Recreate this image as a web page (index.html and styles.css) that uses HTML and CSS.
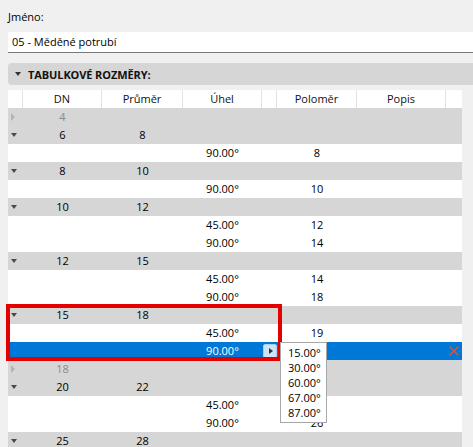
FILE: index.html
```html
<!DOCTYPE html>
<html lang="cs">
<head>
<meta charset="utf-8">
<title>Tabulkové rozměry</title>
<link rel="stylesheet" href="styles.css">
</head>
<body>
<div class="page">
  <div class="label">Jméno:</div>
  <div class="input">05 - Měděné potrubí</div>
  <div class="section"><span class="tri-down dark"></span><span class="section-title">TABULKOVÉ ROZMĚRY:</span></div>
  <div class="table">
    <div class="row head">
      <div class="c"></div><div class="c">DN</div><div class="c">Průměr</div><div class="c">Úhel</div><div class="c"></div><div class="c">Poloměr</div><div class="c">Popis</div><div class="c"></div>
    </div>
    <div class="row grp off"><div class="c"><span class="tri-right"></span></div><div class="c">4</div><div class="c"></div><div class="c"></div><div class="c"></div><div class="c"></div><div class="c"></div><div class="c"></div></div>
    <div class="row grp"><div class="c"><span class="tri-down"></span></div><div class="c">6</div><div class="c">8</div><div class="c"></div><div class="c"></div><div class="c"></div><div class="c"></div><div class="c"></div></div>
    <div class="row"><div class="c"></div><div class="c"></div><div class="c"></div><div class="c">90.00°</div><div class="c"></div><div class="c">8</div><div class="c"></div><div class="c"></div></div>
    <div class="row grp"><div class="c"><span class="tri-down"></span></div><div class="c">8</div><div class="c">10</div><div class="c"></div><div class="c"></div><div class="c"></div><div class="c"></div><div class="c"></div></div>
    <div class="row"><div class="c"></div><div class="c"></div><div class="c"></div><div class="c">90.00°</div><div class="c"></div><div class="c">10</div><div class="c"></div><div class="c"></div></div>
    <div class="row grp"><div class="c"><span class="tri-down"></span></div><div class="c">10</div><div class="c">12</div><div class="c"></div><div class="c"></div><div class="c"></div><div class="c"></div><div class="c"></div></div>
    <div class="row"><div class="c"></div><div class="c"></div><div class="c"></div><div class="c">45.00°</div><div class="c"></div><div class="c">12</div><div class="c"></div><div class="c"></div></div>
    <div class="row"><div class="c"></div><div class="c"></div><div class="c"></div><div class="c">90.00°</div><div class="c"></div><div class="c">14</div><div class="c"></div><div class="c"></div></div>
    <div class="row grp"><div class="c"><span class="tri-down"></span></div><div class="c">12</div><div class="c">15</div><div class="c"></div><div class="c"></div><div class="c"></div><div class="c"></div><div class="c"></div></div>
    <div class="row"><div class="c"></div><div class="c"></div><div class="c"></div><div class="c">45.00°</div><div class="c"></div><div class="c">14</div><div class="c"></div><div class="c"></div></div>
    <div class="row"><div class="c"></div><div class="c"></div><div class="c"></div><div class="c">90.00°</div><div class="c"></div><div class="c">18</div><div class="c"></div><div class="c"></div></div>
    <div class="row grp"><div class="c"><span class="tri-down"></span></div><div class="c">15</div><div class="c">18</div><div class="c"></div><div class="c"></div><div class="c"></div><div class="c"></div><div class="c"></div></div>
    <div class="row"><div class="c"></div><div class="c"></div><div class="c"></div><div class="c">45.00°</div><div class="c"></div><div class="c">19</div><div class="c"></div><div class="c"></div></div>
    <div class="row sel"><div class="c"></div><div class="c"></div><div class="c"></div><div class="c">90.00°</div><div class="c"><span class="btn"><span class="btn-tri"></span></span></div><div class="c"></div><div class="c"></div><div class="c"><svg class="del" width="10" height="10" viewBox="0 0 10 10"><path d="M0.5 0.5 L9.5 9.5 M9.5 0.5 L0.5 9.5" stroke="#e8532f" stroke-width="1.4" fill="none"/></svg></div></div>
    <div class="row grp off"><div class="c"><span class="tri-right"></span></div><div class="c">18</div><div class="c"></div><div class="c"></div><div class="c"></div><div class="c"></div><div class="c"></div><div class="c"></div></div>
    <div class="row grp"><div class="c"><span class="tri-down"></span></div><div class="c">20</div><div class="c">22</div><div class="c"></div><div class="c"></div><div class="c"></div><div class="c"></div><div class="c"></div></div>
    <div class="row"><div class="c"></div><div class="c"></div><div class="c"></div><div class="c">45.00°</div><div class="c"></div><div class="c"></div><div class="c"></div><div class="c"></div></div>
    <div class="row"><div class="c"></div><div class="c"></div><div class="c"></div><div class="c">90.00°</div><div class="c"></div><div class="c">26</div><div class="c"></div><div class="c"></div></div>
    <div class="row grp"><div class="c"><span class="tri-down"></span></div><div class="c">25</div><div class="c">28</div><div class="c"></div><div class="c"></div><div class="c"></div><div class="c"></div><div class="c"></div></div>

    <div class="highlight"></div>
    <ul class="dropdown">
      <li>15.00°</li>
      <li>30.00°</li>
      <li>60.00°</li>
      <li>67.00°</li>
      <li>87.00°</li>
    </ul>
  </div>
</div>
</body>
</html>
```

FILE: styles.css
```css
html, body {
  margin: 0;
  padding: 0;
  height: 100%;
  overflow: hidden;
}
body {
  background: #f0f0f0;
  font-family: "Open Sans", "Noto Sans", sans-serif;
  font-size: 11px;
  color: #000;
}
.page {
  padding-left: 8px;
}
.label {
  padding-top: 9px;
  line-height: 16px;
  height: 16px;
  color: #000;
}
.input {
  margin-top: 7px;
  height: 20px;
  line-height: 20px;
  background: #fff;
  border-bottom: 1px solid #7a7a7a;
  padding-left: 4px;
}
.section {
  margin-top: 10px;
  height: 22px;
  background: #d6d6d6;
  border-radius: 4px 0 0 4px;
  display: flex;
  align-items: center;
}
.section-title {
  font-weight: bold;
  color: #111;
  margin-left: 7px;
  letter-spacing: -0.1px;
}
.tri-down {
  display: inline-block;
  width: 0;
  height: 0;
  border-left: 3.5px solid transparent;
  border-right: 3.5px solid transparent;
  border-top: 4px solid #4a4a4a;
}
.section .tri-down {
  margin-left: 7px;
  border-top-color: #333;
}
.tri-right {
  display: inline-block;
  width: 0;
  height: 0;
  border-top: 4px solid transparent;
  border-bottom: 4px solid transparent;
  border-left: 4px solid #b4b4b4;
}
.table {
  position: relative;
  margin-top: 5px;
  width: 454px;
}
.row {
  display: grid;
  grid-template-columns: 15px 79px 81px 79px 15px 80px 89px 16px;
  height: 18px;
  line-height: 18px;
  background: #fff;
}
.c {
  text-align: center;
  white-space: nowrap;
  overflow: hidden;
  display: flex;
  align-items: center;
  justify-content: center;
}
.row .c:first-child {
  justify-content: flex-start;
  padding-left: 3px;
}
.head .c {
  border-right: 1px solid #e2e2e2;
  color: #111;
}
.head .c:last-child {
  border-right: none;
}
.grp {
  background: #d6d6d6;
}
.off {
  color: #8a8a8a;
}
.sel {
  background: #0078d7;
  color: #fff;
}
.btn {
  width: 12px;
  height: 12px;
  background: #cce4f7;
  border: 1px solid #a8cff0;
  border-radius: 2px;
  display: flex;
  align-items: center;
  justify-content: center;
  margin-left: 1px;
}
.btn-tri {
  width: 0;
  height: 0;
  border-top: 3.5px solid transparent;
  border-bottom: 3.5px solid transparent;
  border-left: 4px solid #333;
  margin-left: 1px;
}
.sel .c:last-child {
  justify-content: flex-start;
  padding-left: 3px;
}
.highlight {
  position: absolute;
  left: -2px;
  top: 214px;
  width: 276px;
  height: 57px;
  box-sizing: border-box;
  border: 4px solid #e50000;
  pointer-events: none;
}
.dropdown {
  position: absolute;
  left: 272px;
  top: 252px;
  width: 47px;
  box-sizing: border-box;
  margin: 0;
  padding: 2px 0 2px 7px;
  list-style: none;
  background: #fff;
  border: 1px solid #a8a8a8;
}
.dropdown li {
  height: 15px;
  line-height: 15px;
  color: #000;
}
```
